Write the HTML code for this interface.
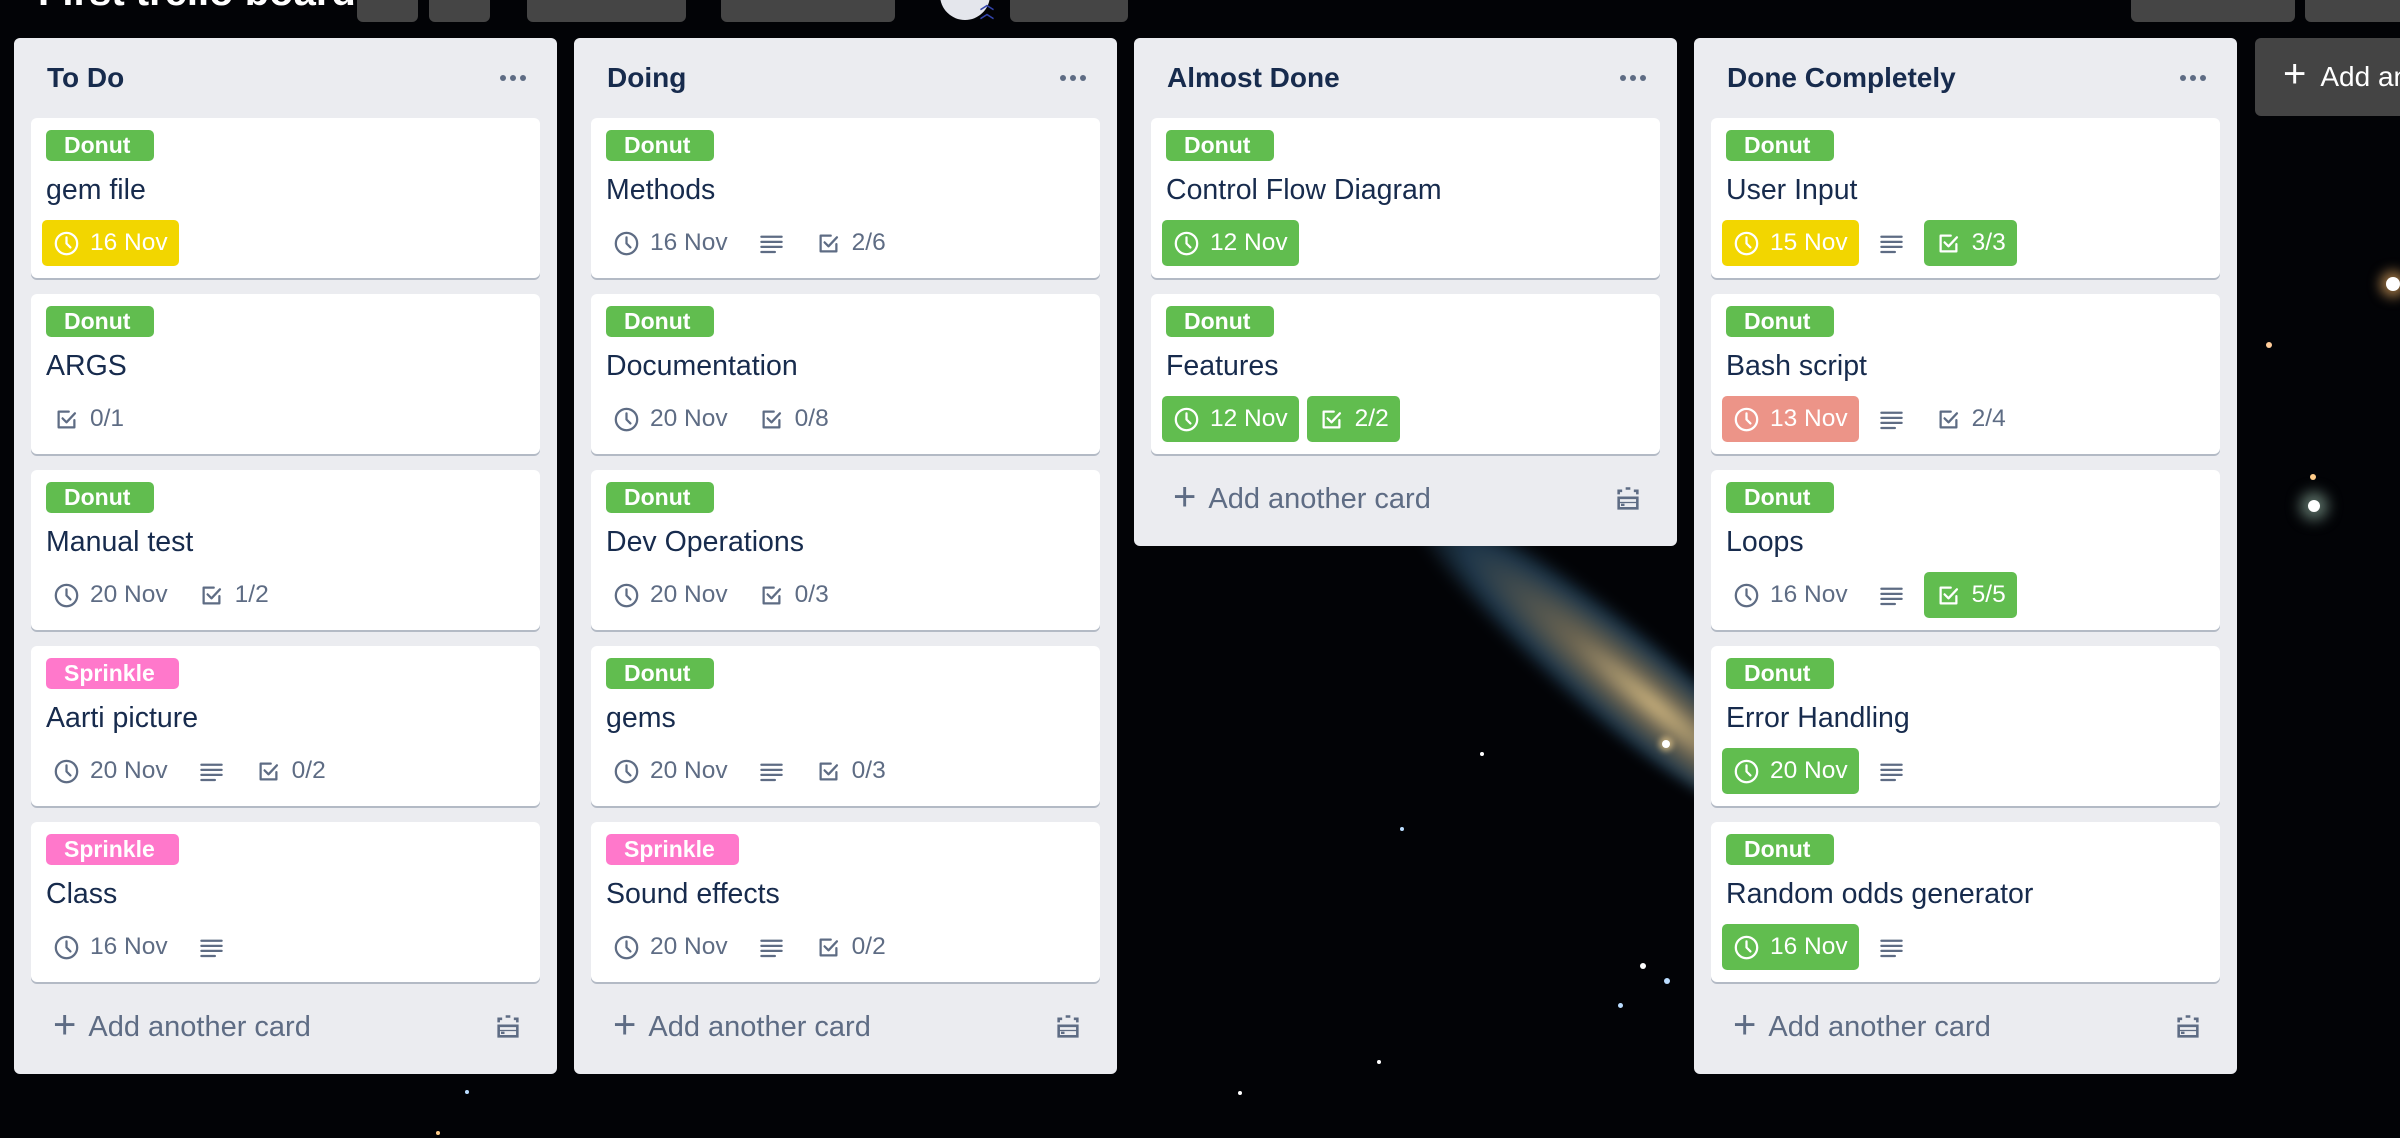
<!DOCTYPE html>
<html><head><meta charset="utf-8"><style>
*{box-sizing:border-box;margin:0;padding:0}
body{width:2400px;height:1138px;overflow:hidden;background:#020306;font-family:"Liberation Sans",Arial,sans-serif;position:relative}
.star{position:absolute;border-radius:50%;background:#fff}
.galaxy{position:absolute;left:1360px;top:610px;width:480px;height:100px;transform:rotate(40deg);border-radius:50%;background:radial-gradient(ellipse at 65% 50%,rgba(230,200,140,.9) 0%,rgba(160,150,120,.65) 25%,rgba(50,90,120,.6) 55%,rgba(0,0,0,0) 75%);filter:blur(6px)}
.title{position:absolute;left:38px;top:-30px;color:#fff;font-size:40px;font-weight:bold}
.tb{position:absolute;top:-8px;height:30px;background:#454545;border-radius:6px}
.list{position:absolute;top:38px;width:543px;background:#ebecf0;border-radius:6px;padding:0 17px}
.lh{height:80px;display:flex;align-items:center;justify-content:space-between;padding:0 14px 0 16px;color:#172b4d;font-size:28px;font-weight:bold}
.dots{display:flex;gap:4px}.dots i{width:6px;height:6px;border-radius:50%;background:#5e6c84;display:block}
.card{background:#fff;border-radius:6px;height:160px;margin-bottom:16px;box-shadow:0 2px 0 #b3bac5;padding:12px 15px 0 11px}
.lab{display:inline-block;height:31px;line-height:31px;border-radius:5px;color:#fff;font-weight:bold;font-size:23px;padding:0 24px 0 18px;margin-left:4px}
.g{background:#61bd4f}.p{background:#ff78cb}
.ct{font-size:28.5px;color:#172b4d;height:60px;line-height:60px;margin-left:4px;margin-top:-1px}
.row{display:flex;gap:8px;height:46px}
.b{display:flex;align-items:center;gap:10px;height:46px;padding:0 11px;border-radius:5px;font-size:24.5px;color:#5e6c84}
.b svg{width:27px;height:27px;fill:none;stroke:currentColor;stroke-width:2;stroke-linecap:round;stroke-linejoin:round}
.bg{background:#61bd4f;color:#fff}.by{background:#f2d600;color:#fff}.br{background:#ec9488;color:#fff}
.foot{height:90px;display:flex;align-items:center;justify-content:space-between;padding:0 18px 0 22px;color:#5e6c84;font-size:29px;margin-top:-16px}
.foot span{display:flex;align-items:center;gap:12px}
.addl{position:absolute;left:2255px;top:38px;width:160px;height:78px;background:rgba(80,80,80,.85);border-radius:6px;color:#fff;font-size:28px;display:flex;align-items:center;padding-left:28px;gap:14px;white-space:nowrap}
</style></head><body>
<div class="galaxy"></div>
<div class="star" style="left:2386px;top:277px;width:14px;height:14px;box-shadow:0 0 12px 6px rgba(255,190,110,.6)"></div>
<div class="star" style="left:2308px;top:500px;width:12px;height:12px;box-shadow:0 0 14px 8px rgba(180,220,200,.5)"></div>
<div class="star" style="left:2266px;top:342px;width:6px;height:6px;background:#fc9"></div>
<div class="star" style="left:2310px;top:474px;width:6px;height:6px;background:#fc8"></div>
<div class="star" style="left:1662px;top:740px;width:8px;height:8px;box-shadow:0 0 6px 3px rgba(255,220,150,.6)"></div>
<div class="star" style="left:1640px;top:963px;width:6px;height:6px"></div>
<div class="star" style="left:1664px;top:978px;width:6px;height:6px;background:#bdf"></div>
<div class="star" style="left:1618px;top:1003px;width:5px;height:5px;background:#bdf"></div>
<div class="star" style="left:1400px;top:827px;width:4px;height:4px;background:#bdf"></div>
<div class="star" style="left:1480px;top:752px;width:4px;height:4px"></div>
<div class="star" style="left:1377px;top:1060px;width:4px;height:4px"></div>
<div class="star" style="left:436px;top:1131px;width:4px;height:4px;background:#fc8"></div>
<div class="star" style="left:1238px;top:1091px;width:4px;height:4px"></div>
<div class="star" style="left:465px;top:1090px;width:4px;height:4px;background:#bdf"></div>
<div class="star" style="left:1464px;top:54px;width:4px;height:4px;background:#fc8"></div>
<div class="title">First trello board</div>
<div class="tb" style="left:357px;width:61px"></div>
<div class="tb" style="left:429px;width:61px"></div>
<div class="tb" style="left:527px;width:159px"></div>
<div class="tb" style="left:721px;width:174px"></div>
<div style="position:absolute;left:940px;top:-30px;width:50px;height:50px;border-radius:50%;background:#e4e6ec"></div>
<div style="position:absolute;left:980px;top:0;color:#3344aa;font-size:14px;font-weight:bold;line-height:9px">︿<br>︿</div>
<div class="tb" style="left:1010px;width:118px"></div>
<div class="tb" style="left:2131px;width:164px"></div>
<div class="tb" style="left:2305px;width:120px"></div>

<!-- List 1 -->
<div class="list" style="left:14px;height:1036px">
<div class="lh">To Do<div class="dots"><i></i><i></i><i></i></div></div>
<div class="card"><span class="lab g">Donut</span><div class="ct">gem file</div><div class="row"><div class="b by"><svg viewBox="0 0 24 24"><circle cx="12" cy="12" r="9.5"/><path d="M12 6.5v5.5l3.5 3.5"/></svg>16 Nov</div></div></div>
<div class="card"><span class="lab g">Donut</span><div class="ct">ARGS</div><div class="row"><div class="b"><svg viewBox="0 0 24 24"><path d="M19 12.5V19H5V5h9"/><path d="M8.5 11l3.5 3.5 7.5-8"/></svg>0/1</div></div></div>
<div class="card"><span class="lab g">Donut</span><div class="ct">Manual test</div><div class="row"><div class="b"><svg viewBox="0 0 24 24"><circle cx="12" cy="12" r="9.5"/><path d="M12 6.5v5.5l3.5 3.5"/></svg>20 Nov</div><div class="b"><svg viewBox="0 0 24 24"><path d="M19 12.5V19H5V5h9"/><path d="M8.5 11l3.5 3.5 7.5-8"/></svg>1/2</div></div></div>
<div class="card"><span class="lab p">Sprinkle</span><div class="ct">Aarti picture</div><div class="row"><div class="b"><svg viewBox="0 0 24 24"><circle cx="12" cy="12" r="9.5"/><path d="M12 6.5v5.5l3.5 3.5"/></svg>20 Nov</div><div class="b"><svg viewBox="0 0 24 24"><path d="M3 6h18M3 10.5h18M3 15h18M3 19.5h12"/></svg></div><div class="b"><svg viewBox="0 0 24 24"><path d="M19 12.5V19H5V5h9"/><path d="M8.5 11l3.5 3.5 7.5-8"/></svg>0/2</div></div></div>
<div class="card"><span class="lab p">Sprinkle</span><div class="ct">Class</div><div class="row"><div class="b"><svg viewBox="0 0 24 24"><circle cx="12" cy="12" r="9.5"/><path d="M12 6.5v5.5l3.5 3.5"/></svg>16 Nov</div><div class="b"><svg viewBox="0 0 24 24"><path d="M3 6h18M3 10.5h18M3 15h18M3 19.5h12"/></svg></div></div></div>
<div class="foot"><span><b style="font-weight:normal;font-size:40px;margin-top:-4px">+</b>Add another card</span><svg width="28" height="28" viewBox="0 0 24 24" fill="none" stroke="#5e6c84" stroke-width="2.2"><path d="M4 8V5h3M10 3h4M17 5h3v3M4 11v9h16v-9z" /><path d="M4 15h16" stroke-width="1"/><rect x="6" y="16" width="3" height="2" fill="#5e6c84" stroke="none"/></svg></div>
</div>

<!-- List 2 -->
<div class="list" style="left:574px;height:1036px">
<div class="lh">Doing<div class="dots"><i></i><i></i><i></i></div></div>
<div class="card"><span class="lab g">Donut</span><div class="ct">Methods</div><div class="row"><div class="b"><svg viewBox="0 0 24 24"><circle cx="12" cy="12" r="9.5"/><path d="M12 6.5v5.5l3.5 3.5"/></svg>16 Nov</div><div class="b"><svg viewBox="0 0 24 24"><path d="M3 6h18M3 10.5h18M3 15h18M3 19.5h12"/></svg></div><div class="b"><svg viewBox="0 0 24 24"><path d="M19 12.5V19H5V5h9"/><path d="M8.5 11l3.5 3.5 7.5-8"/></svg>2/6</div></div></div>
<div class="card"><span class="lab g">Donut</span><div class="ct">Documentation</div><div class="row"><div class="b"><svg viewBox="0 0 24 24"><circle cx="12" cy="12" r="9.5"/><path d="M12 6.5v5.5l3.5 3.5"/></svg>20 Nov</div><div class="b"><svg viewBox="0 0 24 24"><path d="M19 12.5V19H5V5h9"/><path d="M8.5 11l3.5 3.5 7.5-8"/></svg>0/8</div></div></div>
<div class="card"><span class="lab g">Donut</span><div class="ct">Dev Operations</div><div class="row"><div class="b"><svg viewBox="0 0 24 24"><circle cx="12" cy="12" r="9.5"/><path d="M12 6.5v5.5l3.5 3.5"/></svg>20 Nov</div><div class="b"><svg viewBox="0 0 24 24"><path d="M19 12.5V19H5V5h9"/><path d="M8.5 11l3.5 3.5 7.5-8"/></svg>0/3</div></div></div>
<div class="card"><span class="lab g">Donut</span><div class="ct">gems</div><div class="row"><div class="b"><svg viewBox="0 0 24 24"><circle cx="12" cy="12" r="9.5"/><path d="M12 6.5v5.5l3.5 3.5"/></svg>20 Nov</div><div class="b"><svg viewBox="0 0 24 24"><path d="M3 6h18M3 10.5h18M3 15h18M3 19.5h12"/></svg></div><div class="b"><svg viewBox="0 0 24 24"><path d="M19 12.5V19H5V5h9"/><path d="M8.5 11l3.5 3.5 7.5-8"/></svg>0/3</div></div></div>
<div class="card"><span class="lab p">Sprinkle</span><div class="ct">Sound effects</div><div class="row"><div class="b"><svg viewBox="0 0 24 24"><circle cx="12" cy="12" r="9.5"/><path d="M12 6.5v5.5l3.5 3.5"/></svg>20 Nov</div><div class="b"><svg viewBox="0 0 24 24"><path d="M3 6h18M3 10.5h18M3 15h18M3 19.5h12"/></svg></div><div class="b"><svg viewBox="0 0 24 24"><path d="M19 12.5V19H5V5h9"/><path d="M8.5 11l3.5 3.5 7.5-8"/></svg>0/2</div></div></div>
<div class="foot"><span><b style="font-weight:normal;font-size:40px;margin-top:-4px">+</b>Add another card</span><svg width="28" height="28" viewBox="0 0 24 24" fill="none" stroke="#5e6c84" stroke-width="2.2"><path d="M4 8V5h3M10 3h4M17 5h3v3M4 11v9h16v-9z" /><path d="M4 15h16" stroke-width="1"/><rect x="6" y="16" width="3" height="2" fill="#5e6c84" stroke="none"/></svg></div>
</div>

<!-- List 3 -->
<div class="list" style="left:1134px;height:508px">
<div class="lh">Almost Done<div class="dots"><i></i><i></i><i></i></div></div>
<div class="card"><span class="lab g">Donut</span><div class="ct">Control Flow Diagram</div><div class="row"><div class="b bg"><svg viewBox="0 0 24 24"><circle cx="12" cy="12" r="9.5"/><path d="M12 6.5v5.5l3.5 3.5"/></svg>12 Nov</div></div></div>
<div class="card"><span class="lab g">Donut</span><div class="ct">Features</div><div class="row"><div class="b bg"><svg viewBox="0 0 24 24"><circle cx="12" cy="12" r="9.5"/><path d="M12 6.5v5.5l3.5 3.5"/></svg>12 Nov</div><div class="b bg"><svg viewBox="0 0 24 24"><path d="M19 12.5V19H5V5h9"/><path d="M8.5 11l3.5 3.5 7.5-8"/></svg>2/2</div></div></div>
<div class="foot"><span><b style="font-weight:normal;font-size:40px;margin-top:-4px">+</b>Add another card</span><svg width="28" height="28" viewBox="0 0 24 24" fill="none" stroke="#5e6c84" stroke-width="2.2"><path d="M4 8V5h3M10 3h4M17 5h3v3M4 11v9h16v-9z" /><path d="M4 15h16" stroke-width="1"/><rect x="6" y="16" width="3" height="2" fill="#5e6c84" stroke="none"/></svg></div>
</div>

<!-- List 4 -->
<div class="list" style="left:1694px;height:1036px">
<div class="lh">Done Completely<div class="dots"><i></i><i></i><i></i></div></div>
<div class="card"><span class="lab g">Donut</span><div class="ct">User Input</div><div class="row"><div class="b by"><svg viewBox="0 0 24 24"><circle cx="12" cy="12" r="9.5"/><path d="M12 6.5v5.5l3.5 3.5"/></svg>15 Nov</div><div class="b"><svg viewBox="0 0 24 24"><path d="M3 6h18M3 10.5h18M3 15h18M3 19.5h12"/></svg></div><div class="b bg"><svg viewBox="0 0 24 24"><path d="M19 12.5V19H5V5h9"/><path d="M8.5 11l3.5 3.5 7.5-8"/></svg>3/3</div></div></div>
<div class="card"><span class="lab g">Donut</span><div class="ct">Bash script</div><div class="row"><div class="b br"><svg viewBox="0 0 24 24"><circle cx="12" cy="12" r="9.5"/><path d="M12 6.5v5.5l3.5 3.5"/></svg>13 Nov</div><div class="b"><svg viewBox="0 0 24 24"><path d="M3 6h18M3 10.5h18M3 15h18M3 19.5h12"/></svg></div><div class="b"><svg viewBox="0 0 24 24"><path d="M19 12.5V19H5V5h9"/><path d="M8.5 11l3.5 3.5 7.5-8"/></svg>2/4</div></div></div>
<div class="card"><span class="lab g">Donut</span><div class="ct">Loops</div><div class="row"><div class="b"><svg viewBox="0 0 24 24"><circle cx="12" cy="12" r="9.5"/><path d="M12 6.5v5.5l3.5 3.5"/></svg>16 Nov</div><div class="b"><svg viewBox="0 0 24 24"><path d="M3 6h18M3 10.5h18M3 15h18M3 19.5h12"/></svg></div><div class="b bg"><svg viewBox="0 0 24 24"><path d="M19 12.5V19H5V5h9"/><path d="M8.5 11l3.5 3.5 7.5-8"/></svg>5/5</div></div></div>
<div class="card"><span class="lab g">Donut</span><div class="ct">Error Handling</div><div class="row"><div class="b bg"><svg viewBox="0 0 24 24"><circle cx="12" cy="12" r="9.5"/><path d="M12 6.5v5.5l3.5 3.5"/></svg>20 Nov</div><div class="b"><svg viewBox="0 0 24 24"><path d="M3 6h18M3 10.5h18M3 15h18M3 19.5h12"/></svg></div></div></div>
<div class="card"><span class="lab g">Donut</span><div class="ct">Random odds generator</div><div class="row"><div class="b bg"><svg viewBox="0 0 24 24"><circle cx="12" cy="12" r="9.5"/><path d="M12 6.5v5.5l3.5 3.5"/></svg>16 Nov</div><div class="b"><svg viewBox="0 0 24 24"><path d="M3 6h18M3 10.5h18M3 15h18M3 19.5h12"/></svg></div></div></div>
<div class="foot"><span><b style="font-weight:normal;font-size:40px;margin-top:-4px">+</b>Add another card</span><svg width="28" height="28" viewBox="0 0 24 24" fill="none" stroke="#5e6c84" stroke-width="2.2"><path d="M4 8V5h3M10 3h4M17 5h3v3M4 11v9h16v-9z" /><path d="M4 15h16" stroke-width="1"/><rect x="6" y="16" width="3" height="2" fill="#5e6c84" stroke="none"/></svg></div>
</div>

<div class="addl"><span style="font-size:40px;margin-top:-5px">+</span>Add another list</div>
</body></html>
